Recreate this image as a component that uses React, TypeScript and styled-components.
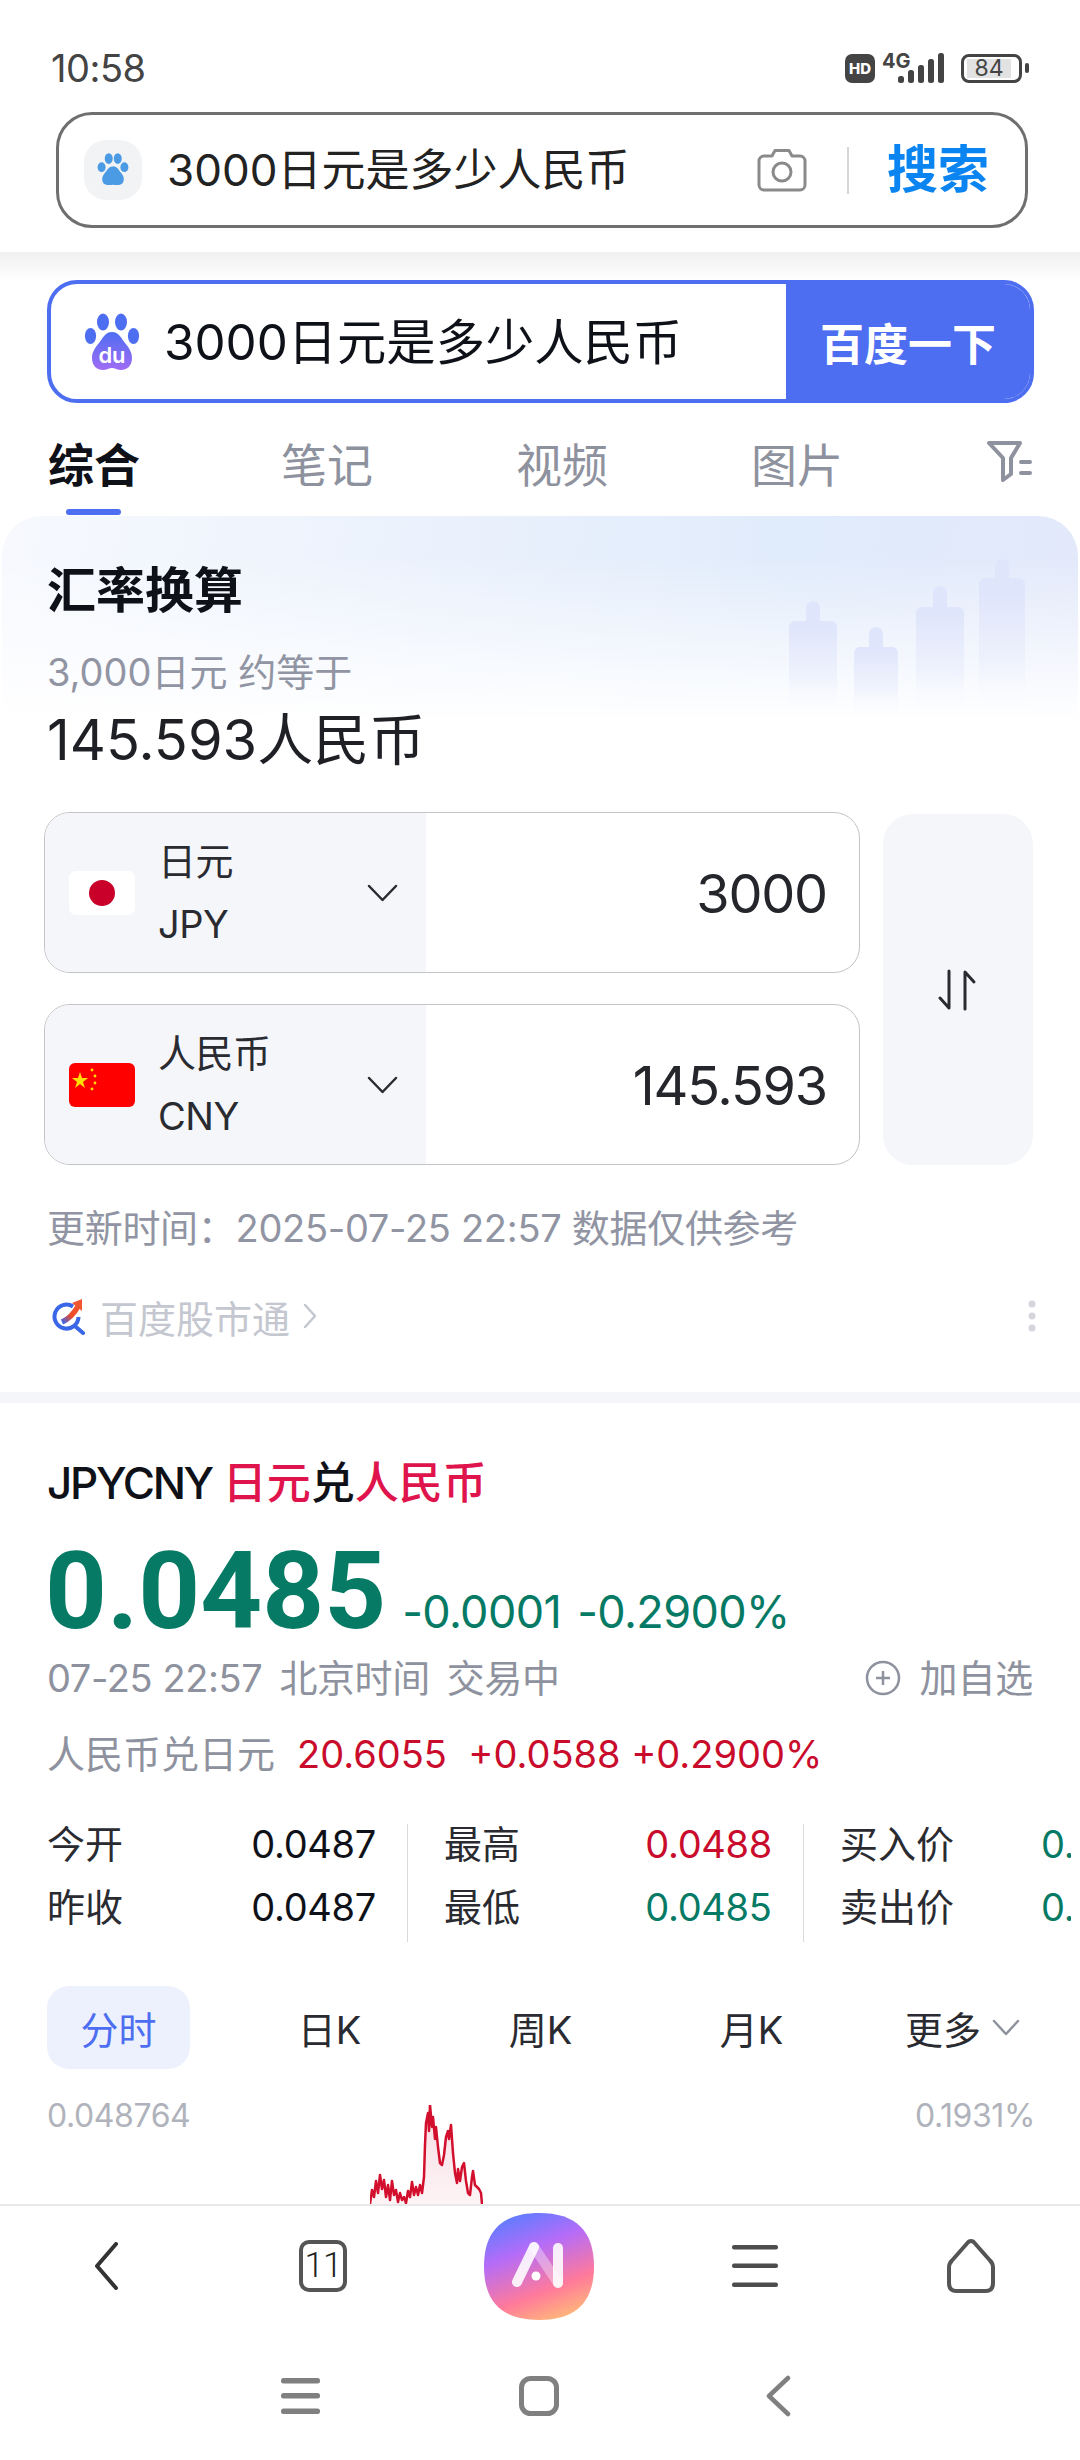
import React from "react";
import styled, { createGlobalStyle } from "styled-components";

const FONT = `"Inter", "Noto Sans CJK SC", sans-serif`;

const GlobalStyle = createGlobalStyle`
  html, body { margin: 0; padding: 0; background: #fff; }
  * { box-sizing: border-box; }
  body { font-family: ${FONT}; }
`;

const Page = styled.div`
  width: 1080px;
  height: 2460px;
  display: flex;
  flex-direction: column;
  overflow: hidden;
  background: #fff;
  color: #1f2026;
`;
const Scroll = styled.div`
  height: 2204px;
  flex: none;
  overflow: hidden;
`;

/* browser header */
const Header = styled.header`
  height: 252px;
  padding: 48px 0 0;
  background: #fff;
`;
const StatusBar = styled.div`
  height: 40px;
  padding: 0 58px 0 51px;
  display: flex;
  align-items: center;
  justify-content: space-between;
`;
const Time = styled.span`
  font-size: 38px;
  line-height: 40px;
  color: #444;
  letter-spacing: -0.5px;
`;
const StatusIcons = styled.div`
  display: flex;
  align-items: center;
`;
const HdBadge = styled.span`
  width: 30px;
  height: 29px;
  border-radius: 7px;
  background: #444;
  color: #fff;
  font-size: 15px;
  font-weight: 800;
  line-height: 29px;
  text-align: center;
`;
const NetLabel = styled.div`
  width: 63px;
  height: 30px;
  margin-left: 7px;
  position: relative;
  font-size: 20px;
  font-weight: 700;
  line-height: 16px;
  color: #444;
`;
const SignalIcon = styled.svg`
  position: absolute;
  left: 16px;
  top: 0;
`;
const Battery = styled.div`
  width: 61px;
  height: 29px;
  margin-left: 16px;
  padding: 2px 8px 2px 3px;
  border: 3px solid #444;
  border-radius: 8px;
  background: #fff;
  position: relative;
  &::after {
    content: "";
    position: absolute;
    right: -10px;
    top: 6px;
    width: 4px;
    height: 10px;
    border-radius: 2px;
    background: #444;
  }
`;
const BatteryLevel = styled.div`
  height: 100%;
  background: #e2e2e2;
  color: #444;
  font-size: 23px;
  line-height: 19px;
  text-align: center;
`;
const AddressBar = styled.div`
  height: 116px;
  margin: 24px 52px 0 56px;
  padding: 0 36px 0 25px;
  display: flex;
  align-items: center;
  border: 3px solid #6f6f6f;
  border-radius: 36px;
  background: #fff;
`;
const PawTile = styled.div`
  width: 58px;
  height: 60px;
  border-radius: 22px;
  background: #f2f3f5;
  display: flex;
  align-items: center;
  justify-content: center;
`;
const AddressText = styled.span`
  margin-left: 25px;
  flex: 1;
  font-size: 44px;
  line-height: 60px;
  color: #222;
`;
const Divider = styled.span`
  width: 2px;
  height: 47px;
  margin: 0 38px 0 40px;
  background: #d6d6d6;
`;
const SearchAction = styled.span`
  font-size: 51px;
  line-height: 60px;
  font-weight: 700;
  color: #0a84f0;
`;

/* baidu page */
const SearchArea = styled.div`
  padding: 28px 46px 0 47px;
  background: linear-gradient(to bottom, #f0f0f0 0, #fbfbfb 22px, #fff 28px);
`;
const SearchBox = styled.div`
  height: 123px;
  display: flex;
  border: 4px solid #4e6ef2;
  border-radius: 30px;
  overflow: hidden;
`;
const SearchInput = styled.div`
  flex: 1;
  display: flex;
  align-items: center;
  padding-left: 33px;
`;
const SearchText = styled.span`
  margin-left: 24px;
  font-size: 49.3px;
  line-height: 60px;
  color: #0f1119;
`;
const SearchButton = styled.div`
  width: 244px;
  background: #4e6ef2;
  color: #fff;
  font-size: 44px;
  font-weight: 600;
  display: flex;
  align-items: center;
  justify-content: center;
`;
const Tabs = styled.nav`
  height: 113px;
  padding: 37px 0 0 48px;
  display: flex;
`;
const Tab = styled.div<{ $active?: boolean }>`
  width: ${(p) => (p.$active ? 233 : 235)}px;
  font-size: 46px;
  line-height: 50px;
  font-weight: ${(p) => (p.$active ? 700 : 400)};
  color: ${(p) => (p.$active ? "#0f1119" : "#8e929e")};
  position: relative;
`;
const TabMark = styled.span`
  position: absolute;
  left: 18px;
  top: 69px;
  width: 55px;
  height: 6px;
  border-radius: 3px;
  background: #4e6ef2;
`;

const Card = styled.section`
  margin: 0 2px;
  padding: 45px 45px 49px 46px;
  height: 876px;
  border-radius: 40px 40px 0 0;
  position: relative;
  background:
    linear-gradient(to bottom, rgba(255, 255, 255, 0) 0, rgba(255, 255, 255, 0) 40px, #fff 205px),
    linear-gradient(100deg, #f7f9fe 0, #e0ebfb 65%, #e4e8fa 100%);
`;
const Candles = styled.svg`
  position: absolute;
  right: 0;
  top: 0;
`;
const CardTitle = styled.h2`
  position: relative;
  margin: 0 0 0 -1px;
  font-size: 49px;
  line-height: 60px;
  font-weight: 600;
  color: #0f1119;
`;
const CardSub = styled.div`
  position: relative;
  margin: 26px 0 0 -1px;
  font-size: 38px;
  line-height: 50px;
  color: #9195a3;
`;
const CardResult = styled.div`
  position: relative;
  margin: 13px 0 0 -1px;
  font-size: 56px;
  line-height: 60px;
  color: #1f2026;
`;
const Converter = styled.div`
  position: relative;
  margin: 42px 0 0 -4px;
  display: flex;
  gap: 23px;
`;
const Rows = styled.div`
  width: 816px;
  display: flex;
  flex-direction: column;
  gap: 31px;
`;
const CurrencyRow = styled.div`
  height: 161px;
  display: flex;
  border: 1.5px solid #c4c4c8;
  border-radius: 26px;
  overflow: hidden;
  background: #fff;
`;
const CurrencyPick = styled.div`
  width: 381px;
  padding-left: 24px;
  display: flex;
  align-items: center;
  background: #f5f6fa;
`;
const Flag = styled.svg`
  flex: none;
`;
const CurrencyName = styled.div`
  width: 209px;
  margin-left: 23px;
  font-size: 38px;
  line-height: 63px;
  letter-spacing: -0.5px;
  color: #2a2b31;
`;
const CurrencyValue = styled.div`
  flex: 1;
  padding-right: 32px;
  text-align: right;
  font-size: 54px;
  letter-spacing: -1.2px;
  line-height: 162px;
  color: #25262c;
`;
const SwapButton = styled.div`
  width: 150px;
  margin-top: 2px;
  border-radius: 30px;
  background: #f5f6fa;
  display: flex;
  align-items: center;
  justify-content: center;
`;
const Note = styled.div`
  margin: 38px 0 0 -1px;
  font-size: 38px;
  line-height: 50px;
  color: #9195a3;
  letter-spacing: -0.3px;
`;
const SourceRow = styled.div`
  margin-top: 38px;
  height: 50px;
  padding-left: 4px;
  display: flex;
  align-items: center;
  font-size: 38px;
  color: #c4c7cf;
`;
const SourceName = styled.span`
  margin-left: 12px;
  margin-right: 9px;
`;
const MoreDots = styled.svg`
  margin-left: auto;
  margin-right: -3px;
`;
const SectionGap = styled.div`
  height: 11px;
  background: #f5f6fa;
`;

/* quote */
const Quote = styled.section`
  padding: 50px 47px 0 47px;
`;
const QuoteTitle = styled.div`
  font-size: 44px;
  line-height: 60px;
  font-weight: 500;
  color: #0f1119;
  white-space: nowrap;
`;
const QuoteCode = styled.span`
  letter-spacing: -2.3px;
  margin-right: -1px;
`;
const RedName = styled.span`
  color: #e0144c;
`;
const PriceRow = styled.div`
  margin: 28px 0 0 -2px;
  height: 100px;
  display: flex;
  align-items: baseline;
  color: #067a64;
  white-space: nowrap;
`;
const Price = styled.span`
  font-family: "Roboto", "Inter", sans-serif;
  font-size: 108px;
  line-height: 100px;
  font-weight: 700;
`;
const PriceChange = styled.span`
  margin-left: 16px;
  font-size: 45px;
  letter-spacing: -0.6px;
  word-spacing: 4px;
`;
const TimeRow = styled.div`
  margin-top: 12px;
  display: flex;
  justify-content: space-between;
  font-size: 38px;
  line-height: 50px;
  color: #8e929e;
`;
const TimeText = styled.span`
  display: flex;
  gap: 17px;
  letter-spacing: -0.4px;
`;
const AddWatch = styled.span`
  display: flex;
  align-items: center;
  gap: 19px;
  letter-spacing: -0.2px;
`;
const CrossRow = styled.div`
  margin-top: 26px;
  font-size: 38px;
  line-height: 50px;
  color: #8e929e;
  white-space: nowrap;
`;
const CrossFigure = styled.span`
  margin-left: 22px;
  color: #c90b2c;
`;
const Stats = styled.div`
  margin-top: 45px;
  width: 1024px;
  display: flex;
`;
const StatCol = styled.div<{ $width: number; $ruled?: boolean }>`
  flex: none;
  width: ${(p) => p.$width}px;
  padding: 0 31px 15px ${(p) => (p.$ruled ? 36 : 0)}px;
  border-right: 1px solid #d8d9dd;
  display: grid;
  grid-template-columns: 1fr auto;
  row-gap: 23px;
  font-size: 38px;
  line-height: 40px;
  &:last-child {
    border-right: 0;
    padding-right: 0;
    overflow: hidden;
    grid-template-columns: 201px auto;
  }
`;
const StatLabel = styled.span`
  color: #2a2b31;
`;
const StatValue = styled.span<{ $color?: string }>`
  color: ${(p) => p.$color || "#0f1119"};
  letter-spacing: -0.3px;
`;
const RangeTabs = styled.div`
  margin: 44px 0 0 0;
  display: flex;
  gap: 68px;
`;
const RangeTab = styled.div<{ $active?: boolean }>`
  flex: none;
  width: 143px;
  height: 83px;
  border-radius: 22px;
  display: flex;
  align-items: center;
  justify-content: center;
  gap: 11px;
  white-space: nowrap;
  font-size: 38px;
  background: ${(p) => (p.$active ? "#edf1fd" : "transparent")};
  color: ${(p) => (p.$active ? "#4e6ef2" : "#2a2b31")};
`;
const ChartArea = styled.div`
  margin: 27px -2px 0 0;
  height: 108px;
  display: flex;
  justify-content: space-between;
  position: relative;
  font-size: 32px;
  line-height: 40px;
  color: #b0b3bc;
  letter-spacing: -0.4px;
`;
const ChartLine = styled.svg`
  position: absolute;
  left: 323px;
  top: 9px;
`;

/* bottom bars */
const BottomBar = styled.footer`
  flex: 1;
  border-top: 2px solid #e8e8ea;
  background: #fff;
`;
const ActionBar = styled.div`
  height: 120px;
  margin-left: -1px;
  display: grid;
  grid-template-columns: repeat(5, 216px);
  align-items: center;
  justify-items: center;
`;
const BackIcon = styled.svg`
  margin-left: -2px;
`;
const TabCount = styled.div`
  width: 48px;
  height: 52px;
  border: 4px solid #555;
  border-radius: 10px;
  font-family: "Roboto", sans-serif;
  font-size: 35px;
  font-weight: 300;
  line-height: 44px;
  text-align: center;
  letter-spacing: -1px;
  color: #222;
`;
const SystemBar = styled.div`
  padding-top: 49px;
  margin-left: -2px;
  display: grid;
  grid-template-columns: repeat(3, 239px);
  justify-content: center;
  justify-items: center;
  align-items: center;
`;

const Paw = ({ size, fill }: { size: number; fill: string }) => (
  <svg width={size} height={size} viewBox="0 0 40 40">
    <ellipse cx="8" cy="17" rx="4.2" ry="5.2" fill={fill} />
    <ellipse cx="15.5" cy="8" rx="4.2" ry="5.6" fill={fill} />
    <ellipse cx="25" cy="8" rx="4.2" ry="5.6" fill={fill} />
    <ellipse cx="32" cy="17" rx="4.2" ry="5.2" fill={fill} />
    <path d="M20 16c4.5 0 6 4 8.5 7 2.5 3 3.5 6 2.5 9-1 3.4-5 4.4-11 3.6-6 .8-10-.2-11-3.6-1-3 0-6 2.5-9 2.5-3 4-7 9-7z" fill={fill} />
  </svg>
);

const DuLogo = () => (
  <svg width="56" height="58" viewBox="0 0 56 58">
    <defs>
      <linearGradient id="du" x1="0" y1="0" x2="0" y2="1">
        <stop offset="0" stopColor="#4e6ef2" />
        <stop offset="1" stopColor="#a06cf5" />
      </linearGradient>
    </defs>
    <ellipse cx="19" cy="9" rx="6" ry="8.6" fill="#4e6ef2" />
    <ellipse cx="37" cy="9" rx="6" ry="8.6" fill="#4e6ef2" />
    <ellipse cx="6.5" cy="23" rx="5.6" ry="8" fill="#4e6ef2" />
    <ellipse cx="49.5" cy="23" rx="5.6" ry="8" fill="#4e6ef2" />
    <path d="M28 19c7 0 9 6 13 11 4 5 7 9 7 15 0 8-5 12-11 12-4 0-6-2-9-2s-5 2-9 2c-6 0-11-4-11-12 0-6 3-10 7-15 4-5 6-11 13-11z" fill="url(#du)" />
    <text x="28" y="50" textAnchor="middle" fontFamily="Inter, sans-serif" fontSize="22" fontWeight="600" fill="#fff">du</text>
  </svg>
);

const CameraIcon = () => (
  <svg width="50" height="44" viewBox="0 0 50 44" fill="none" stroke="#8a8a8a" strokeWidth="3">
    <path d="M7 8h8l3-5.500h14l3 5.500h8a5 5 0 0 1 5 5v24a5 5 0 0 1-5 5H7a5 5 0 0 1-5-5V13a5 5 0 0 1 5-5z" strokeLinejoin="round" />
    <circle cx="25" cy="24" r="9" />
  </svg>
);

const FilterIcon = () => (
  <svg width="47" height="43" viewBox="0 0 47 43" fill="none" stroke="#8e929e" strokeWidth="4" strokeLinejoin="round" strokeLinecap="round">
    <path d="M3 3h31l-9 15v16l-8 6V18z" />
    <path d="M35 22h9M35 33h9" />
  </svg>
);

const AssistantLogo = () => (
  <svg width="110" height="107" viewBox="0 0 110 107">
    <defs>
      <linearGradient id="assistant" x1="0.3" y1="0" x2="0.7" y2="1">
        <stop offset="0" stopColor="#5f7cff" />
        <stop offset="0.33" stopColor="#b56cf8" />
        <stop offset="0.72" stopColor="#ff7a9a" />
        <stop offset="1" stopColor="#ffb87a" />
      </linearGradient>
    </defs>
    <path d="M55 0C92 0 110 18 110 53.500C110 89 92 107 55 107C18 107 0 89 0 53.500C0 18 18 0 55 0Z" fill="url(#assistant)" />
    <g fill="none" strokeLinecap="round" strokeWidth="10">
      <path d="M50 34L74 70" stroke="#fff" strokeOpacity="0.35" />
      <path d="M33 69L50 34" stroke="#fff" strokeOpacity="0.88" />
      <path d="M74 35V70" stroke="#fff" strokeOpacity="0.88" />
    </g>
    <circle cx="52" cy="63" r="4.500" fill="#fff" />
  </svg>
);

const SourceLogo = () => (
  <svg width="36" height="38" viewBox="0 0 36 38" fill="none">
    <defs>
      <linearGradient id="arrow" x1="0" y1="1" x2="1" y2="0">
        <stop offset="0" stopColor="#3a66e8" />
        <stop offset="0.45" stopColor="#ee4b2b" />
        <stop offset="1" stopColor="#f0562f" />
      </linearGradient>
    </defs>
    <path d="M21 9.500A12 12 0 1 0 26.500 20" stroke="#3a66e8" strokeWidth="4" />
    <path d="M24 30l7 6" stroke="#3a66e8" strokeWidth="4" strokeLinecap="round" />
    <path d="M10 25C17 22 23 15 27 8" stroke="url(#arrow)" strokeWidth="5.500" />
    <polygon points="30,2 20,6 30,14" fill="#f0562f" />
  </svg>
);

const Chevron = ({ w = 31, h = 18, color = "#2a2b31", sw = 2.5 }: { w?: number; h?: number; color?: string; sw?: number }) => (
  <svg width={w} height={h} viewBox={`0 0 ${w} ${h}`} fill="none" stroke={color} strokeWidth={sw} strokeLinecap="round" strokeLinejoin="round">
    <polyline points={`2,2 ${w / 2},${h - 2} ${w - 2},2`} />
  </svg>
);

const chartPoints = [
  [0, 99], [2, 85], [4, 92], [6, 76], [8, 88], [10, 70], [12, 84], [14, 75], [16, 92], [18, 80], [20, 95], [22, 76], [24, 90], [26, 85], [28, 97], [30, 88], [32, 95], [34, 92], [36, 98],
  [38, 86], [40, 92], [42, 77], [44, 90], [46, 82], [48, 90], [50, 80], [52, 88], [54, 72], [55, 40], [56, 18], [58, 8], [59, 26], [60, 0], [62, 22], [63, 12], [65, 34], [66, 22], [68, 42], [70, 58], [72, 60],
  [74, 50], [76, 32], [78, 26], [79, 34], [81, 20], [83, 48], [85, 68], [87, 78], [88, 64], [90, 76], [92, 62], [94, 58], [96, 76], [98, 88], [100, 90], [102, 72], [103, 66], [105, 80], [107, 82], [109, 84], [111, 88], [112, 99],
];
const linePath = chartPoints.map(([x, y]) => `${x},${y}`).join(" ");

const Rate = ({ name, code, value, flag }: { name: string; code: string; value: string; flag: React.ReactNode }) => (
  <CurrencyRow>
    <CurrencyPick>
      {flag}
      <CurrencyName>
        {name}
        <br />
        {code}
      </CurrencyName>
      <Chevron />
    </CurrencyPick>
    <CurrencyValue>{value}</CurrencyValue>
  </CurrencyRow>
);

export default function App() {
  return (
    <Page>
      <GlobalStyle />
      <Scroll>
        <Header>
          <StatusBar>
            <Time>10:58</Time>
            <StatusIcons>
              <HdBadge>HD</HdBadge>
              <NetLabel>
                4G
                <SignalIcon width="47" height="30" viewBox="0 0 47 30" fill="#444">
                  <rect x="0" y="23" width="6" height="7" rx="2.500" />
                  <rect x="10" y="17" width="6" height="13" rx="2.500" />
                  <rect x="20" y="12" width="6" height="18" rx="2.500" />
                  <rect x="30" y="6" width="6" height="24" rx="2.500" />
                  <rect x="40" y="0" width="6" height="30" rx="2.500" />
                </SignalIcon>
              </NetLabel>
              <Battery>
                <BatteryLevel>84</BatteryLevel>
              </Battery>
            </StatusIcons>
          </StatusBar>
          <AddressBar>
            <PawTile>
              <Paw size={38} fill="#4a9be4" />
            </PawTile>
            <AddressText>3000日元是多少人民币</AddressText>
            <CameraIcon />
            <Divider />
            <SearchAction>搜索</SearchAction>
          </AddressBar>
        </Header>

        <SearchArea>
          <SearchBox>
            <SearchInput>
              <DuLogo />
              <SearchText>3000日元是多少人民币</SearchText>
            </SearchInput>
            <SearchButton>百度一下</SearchButton>
          </SearchBox>
        </SearchArea>
        <Tabs>
          <Tab $active>
            综合
            <TabMark />
          </Tab>
          <Tab>笔记</Tab>
          <Tab>视频</Tab>
          <Tab>图片</Tab>
          <FilterIcon />
        </Tabs>

        <Card>
          <Candles width="300" height="210" viewBox="0 0 300 210">
            <defs>
              <linearGradient id="candle" x1="0" y1="0" x2="0" y2="1">
                <stop offset="0.2" stopColor="#dfe5fb" />
                <stop offset="0.6" stopColor="#ebeffc" stopOpacity="0.7" />
                <stop offset="0.95" stopColor="#fff" stopOpacity="0" />
              </linearGradient>
            </defs>
            <g fill="url(#candle)">
              <path d="M11 210V111a6 6 0 0 1 6-6h11V92a6 6 0 0 1 14 0v13h11a6 6 0 0 1 6 6v99z" />
              <path d="M76 210V137a6 6 0 0 1 6-6h9v-13a7 7 0 0 1 14 0v13h9a6 6 0 0 1 6 6v73z" />
              <path d="M138 210V97a6 6 0 0 1 6-6h11V77a7 7 0 0 1 14 0v14h11a6 6 0 0 1 6 6v113z" />
              <path d="M201 210V68a6 6 0 0 1 6-6h10V50a7 7 0 0 1 14 0v12h10a6 6 0 0 1 6 6v142z" />
            </g>
          </Candles>
          <CardTitle>汇率换算</CardTitle>
          <CardSub>3,000日元 约等于</CardSub>
          <CardResult>145.593人民币</CardResult>
          <Converter>
            <Rows>
              <Rate
                name="日元"
                code="JPY"
                value="3000"
                flag={
                  <Flag width="66" height="44" viewBox="0 0 66 44">
                    <rect width="66" height="44" rx="7" fill="#fff" />
                    <circle cx="33" cy="22" r="13" fill="#c8002a" />
                  </Flag>
                }
              />
              <Rate
                name="人民币"
                code="CNY"
                value="145.593"
                flag={
                  <Flag width="66" height="44" viewBox="0 0 66 44">
                    <rect width="66" height="44" rx="6" fill="#fe0000" />
                    <polygon points="11,9 13,15 19,15 14,19 16,25 11,21 6,25 8,19 3,15 9,15" fill="#ffde00" />
                    <circle cx="23" cy="7" r="1.400" fill="#ffde00" />
                    <circle cx="26" cy="13" r="1.400" fill="#ffde00" />
                    <circle cx="26" cy="20" r="1.400" fill="#ffde00" />
                    <circle cx="23" cy="26" r="1.400" fill="#ffde00" />
                  </Flag>
                }
              />
            </Rows>
            <SwapButton>
              <svg width="40" height="42" viewBox="0 0 40 42" fill="none" stroke="#2a2b31" strokeWidth="3" strokeLinecap="round" strokeLinejoin="round">
                <path d="M11 2v37L2 29" />
                <path d="M27 40V3l9 10" />
              </svg>
            </SwapButton>
          </Converter>
          <Note>更新时间：2025-07-25 22:57 数据仅供参考</Note>
          <SourceRow>
            <SourceLogo />
            <SourceName>百度股市通</SourceName>
            <svg width="20" height="28" viewBox="0 0 20 28" fill="none" stroke="#c4c7cf" strokeWidth="2.500" strokeLinecap="round" strokeLinejoin="round">
              <polyline points="6,3 16,14 6,25" />
            </svg>
            <MoreDots width="8" height="32" viewBox="0 0 8 32" fill="#d4d6dc">
              <circle cx="4" cy="4" r="3.500" />
              <circle cx="4" cy="16" r="3.500" />
              <circle cx="4" cy="28" r="3.500" />
            </MoreDots>
          </SourceRow>
        </Card>
        <SectionGap />

        <Quote>
          <QuoteTitle>
            <QuoteCode>JPYCNY</QuoteCode> <RedName>日元</RedName>兑<RedName>人民币</RedName>
          </QuoteTitle>
          <PriceRow>
            <Price>0.0485</Price>
            <PriceChange>-0.0001 -0.2900%</PriceChange>
          </PriceRow>
          <TimeRow>
            <TimeText>
              <span>07-25 22:57</span>
              <span>北京时间</span>
              <span>交易中</span>
            </TimeText>
            <AddWatch>
              <svg width="36" height="36" viewBox="0 0 36 36" fill="none" stroke="#8e929e" strokeWidth="2.500">
                <circle cx="18" cy="18" r="16" />
                <path d="M18 11v14M11 18h14" />
              </svg>
              加自选
            </AddWatch>
          </TimeRow>
          <CrossRow>
            人民币兑日元
            <CrossFigure>20.6055&nbsp; +0.0588 +0.2900%</CrossFigure>
          </CrossRow>
          <Stats>
            <StatCol $width={361}>
              <StatLabel>今开</StatLabel>
              <StatValue>0.0487</StatValue>
              <StatLabel>昨收</StatLabel>
              <StatValue>0.0487</StatValue>
            </StatCol>
            <StatCol $width={396} $ruled>
              <StatLabel>最高</StatLabel>
              <StatValue $color="#c90b2c">0.0488</StatValue>
              <StatLabel>最低</StatLabel>
              <StatValue $color="#067a64">0.0485</StatValue>
            </StatCol>
            <StatCol $width={267} $ruled>
              <StatLabel>买入价</StatLabel>
              <StatValue $color="#067a64">0.0485</StatValue>
              <StatLabel>卖出价</StatLabel>
              <StatValue $color="#067a64">0.0485</StatValue>
            </StatCol>
          </Stats>
          <RangeTabs>
            <RangeTab $active>分时</RangeTab>
            <RangeTab>日K</RangeTab>
            <RangeTab>周K</RangeTab>
            <RangeTab>月K</RangeTab>
            <RangeTab>
              更多
              <Chevron w={28} h={17} color="#8e929e" />
            </RangeTab>
          </RangeTabs>
          <ChartArea>
            <span>0.048764</span>
            <span>0.1931%</span>
            <ChartLine width="113" height="100" viewBox="0 0 113 100">
              <defs>
                <linearGradient id="area" x1="0" y1="0" x2="0" y2="1">
                  <stop offset="0" stopColor="#f6dde2" />
                  <stop offset="1" stopColor="#fdf4f6" />
                </linearGradient>
              </defs>
              <polygon points={`0,100 ${linePath} 112,100`} fill="url(#area)" />
              <polyline points={linePath} fill="none" stroke="#d20f2c" strokeWidth="2.500" strokeLinejoin="round" />
            </ChartLine>
          </ChartArea>
        </Quote>
      </Scroll>

      <BottomBar>
        <ActionBar>
          <BackIcon width="26" height="48" viewBox="0 0 26 48" fill="none" stroke="#333" strokeWidth="4" strokeLinecap="round" strokeLinejoin="round">
            <path d="M23 2L4 24l19 22" />
          </BackIcon>
          <TabCount>11</TabCount>
          <AssistantLogo />
          <svg width="46" height="42" viewBox="0 0 46 42" fill="#4d4d4d">
            <rect width="46" height="4.500" rx="2" y="0" />
            <rect width="46" height="4.500" rx="2" y="18.500" />
            <rect width="46" height="4.500" rx="2" y="37.500" />
          </svg>
          <svg width="50" height="54" viewBox="0 0 50 54" fill="none" stroke="#555" strokeWidth="4" strokeLinejoin="round">
            <path d="M25 2c2 0 3 1 4 2.500l15 17c2 2 3 4 3 7V44c0 5-2 8-7 8H10c-5 0-7-3-7-8V28.500c0-3 1-5 3-7l15-17C22 3 23 2 25 2z" />
          </svg>
        </ActionBar>
        <SystemBar>
          <svg width="39" height="36" viewBox="0 0 39 36" fill="#808080">
            <rect width="39" height="5.500" rx="2.500" y="0" />
            <rect width="39" height="5.500" rx="2.500" y="15" />
            <rect width="39" height="5.500" rx="2.500" y="30.500" />
          </svg>
          <svg width="40" height="40" viewBox="0 0 40 40" fill="none" stroke="#808080" strokeWidth="5">
            <rect x="2.500" y="2.500" width="35" height="35" rx="9" />
          </svg>
          <svg width="26" height="42" viewBox="0 0 26 42" fill="none" stroke="#808080" strokeWidth="4.500" strokeLinecap="round" strokeLinejoin="round">
            <path d="M23 3L4 21l19 18" />
          </svg>
        </SystemBar>
      </BottomBar>
    </Page>
  );
}
